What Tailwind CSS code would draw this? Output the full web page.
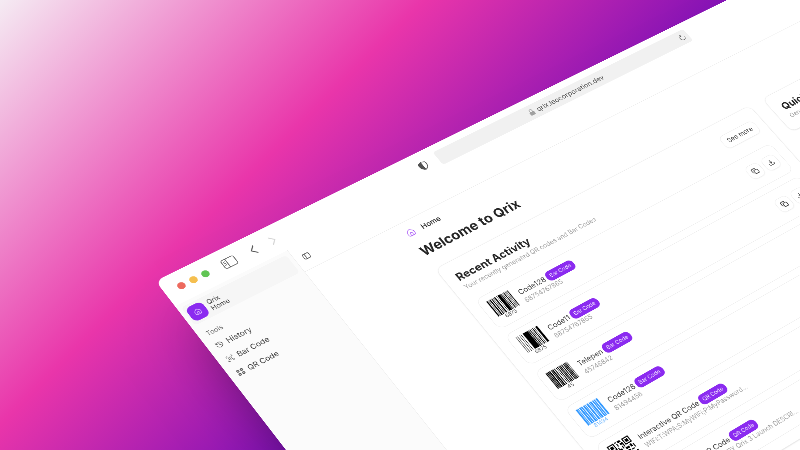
<!DOCTYPE html>
<html lang="en">
<head>
<meta charset="utf-8">
<meta name="viewport" content="width=device-width, initial-scale=1">
<title>Qrix</title>
<script src="https://cdn.jsdelivr.net/npm/@tailwindcss/browser@4"></script>
</head>
<body class="relative h-screen overflow-hidden bg-[linear-gradient(135deg,#f5ebf3_0%,#e935aa_34%,#8512b6_58%,#5c0ab4_66%,#3b0a80_80%)] font-['Inter','Liberation_Sans',sans-serif] text-neutral-700">

<!-- Shared symbols -->
<svg class="hidden" aria-hidden="true">
  <symbol id="house" viewBox="0 0 24 24" fill="none" stroke="currentColor" stroke-width="1.6" stroke-linecap="round" stroke-linejoin="round"><path d="M9 21v-6a3 3 0 0 1 6 0v6"/><path d="M3 11a4 4 0 0 1 1.500-3l5-4.200a4 4 0 0 1 5 0l5 4.200A4 4 0 0 1 21 11v6a4 4 0 0 1-4 4H7a4 4 0 0 1-4-4z"/></symbol>
  <symbol id="panel" viewBox="0 0 24 24" fill="none" stroke="currentColor" stroke-width="2" stroke-linecap="round" stroke-linejoin="round"><rect x="2" y="3" width="20" height="18" rx="4"/><path d="M9 3v18"/></symbol>
  <symbol id="copy" viewBox="0 0 24 24" fill="none" stroke="currentColor" stroke-width="2.4" stroke-linecap="round" stroke-linejoin="round"><rect x="8" y="8" width="14" height="14" rx="3"/><path d="M4 16a2 2 0 0 1-2-2V5a3 3 0 0 1 3-3h9a2 2 0 0 1 2 2"/></symbol>
  <symbol id="download" viewBox="0 0 24 24" fill="none" stroke="currentColor" stroke-width="2.4" stroke-linecap="round" stroke-linejoin="round"><path d="M12 15V3M8 11l4 4 4-4M21 15v2a4 4 0 0 1-4 4H7a4 4 0 0 1-4-4v-2"/></symbol>
  <symbol id="code-a" viewBox="-4 -3 64 62" fill="currentColor"><path d="M0 0h3v44H0zM5 0h1v44H5zM8 0h3v44H8zM13 0h2v44h-2zM17 0h1v44h-1zM20 0h3v44h-3zM26 0h1v44h-1zM29 0h7v44h-7zM37 0h2v44h-2zM41 0h1v44h-1zM44 0h2v44h-2zM48 0h1v44h-1zM51 0h1v44h-1zM54 0h2v44h-2z"/><text x="28" y="55" text-anchor="middle" font-size="12" opacity=".7">6875</text></symbol>
  <symbol id="code-b" viewBox="-4 -3 64 62" fill="currentColor"><path d="M0 0h1v44H0zM4 0h1v44H4zM9 0h1v44H9zM13 0h1v44h-1zM18 0h13v44H18zM32 0h2v44h-2zM36 0h2v44h-2zM40 0h1v44h-1zM43 0h2v44h-2zM47 0h1v44h-1zM51 0h5v44h-5z"/><text x="28" y="55" text-anchor="middle" font-size="12" opacity=".7">6875</text></symbol>
  <symbol id="code-c" viewBox="-4 -3 64 62" fill="currentColor"><path d="M0 0h2v44H0zM3 0h2v44H3zM6 0h2v44H6zM9 0h3v44H9zM14 0h2v44h-2zM17 0h3v44h-3zM22 0h2v44h-2zM27 0h1v44h-1zM30 0h2v44h-2zM34 0h2v44h-2zM37 0h2v44h-2zM41 0h2v44h-2zM45 0h2v44h-2zM48 0h2v44h-2zM51 0h2v44h-2zM55 0h1v44h-1z"/><text x="28" y="55" text-anchor="middle" font-size="12" opacity=".7">45</text></symbol>
  <symbol id="code-d" viewBox="-4 -3 64 62" fill="currentColor"><path d="M0 0h4v44H0zM5 0h2v44H5zM9 0h4v44H9zM14 0h3v44h-3zM19 0h4v44h-4zM24 0h2v44h-2zM28 0h4v44h-4zM34 0h2v44h-2zM37 0h4v44h-4zM43 0h3v44h-3zM47 0h3v44h-3zM52 0h4v44h-4z"/><text x="28" y="55" text-anchor="middle" font-size="12" opacity=".7">81494</text></symbol>
  <symbol id="code-q" viewBox="-2 -2 27 27" fill="currentColor"><path fill-rule="evenodd" d="M0 0h7v7H0zM1 1v5h5V1zM16 0h7v7h-7zM17 1v5h5V1zM0 16h7v7H0zM1 17v5h5v-5z"/><path d="M2 2h3v3H2zM18 2h3v3h-3zM2 18h3v3H2zM8 0h2v1H8zM11 0h3v2h-3zM9 2h1v3H9zM12 3h3v2h-3zM8 6h1v2h2v2H8zM12 6h1v3h-1zM14 5h1v3h-1zM0 8h2v2H0zM3 9h3v1H3zM5 11h4v2H5zM0 11h3v1H0zM1 13h2v2H1zM4 14h3v1H4zM10 11h3v3h-3zM14 9h4v2h-4zM19 8h2v3h-2zM22 9h1v4h-1zM15 12h2v3h-2zM18 13h3v1h-3zM8 15h2v2H8zM12 15h2v3h-2zM9 18h2v2H9zM8 21h4v2H8zM13 20h3v1h-3zM15 16h3v3h-3zM19 16h4v1h-4zM20 18h2v3h-2zM14 22h4v1h-4zM18 20h1v2h-1zM22 22h1v1h-1z"/></symbol>
</svg>

<!-- Browser window, laid flat and tilted in perspective -->
<div class="absolute left-0 top-0 w-[1950px] origin-top-left overflow-hidden rounded-2xl bg-white shadow-[0_120px_120px_-20px_rgb(0_0_0/0.5)] [transform:matrix3d(0.4651,-0.1944,0,0.0000959,0.2771,0.3541,0,-0.00006105,0,0,1,0,155.5,281,0,1)]">
  <header class="grid h-[68px] grid-cols-[1fr_664px_1fr] items-center gap-6 px-7 text-neutral-600">
    <div class="flex items-center">
      <div class="flex gap-[11px]"><span class="size-4 rounded-full bg-[#ed6a5e]"></span><span class="size-4 rounded-full bg-[#f5bf4f]"></span><span class="size-4 rounded-full bg-[#61c554]"></span></div>
      <button aria-label="Show sidebar" class="ml-7"><svg class="h-7 w-9" viewBox="0 0 36 28" fill="none" stroke="currentColor" stroke-width="1.6"><rect x="4" y="4" width="28" height="21" rx="4"/><path d="M14 4v21M7 9h4M7 13h4M7 17h4"/></svg></button>
      <button aria-label="Back" class="ml-6"><svg class="size-7" viewBox="0 0 28 28" fill="none" stroke="currentColor" stroke-width="2.2" stroke-linecap="round"><path d="M18 5 9 14l9 9"/></svg></button>
      <button aria-label="Forward" class="ml-4 text-neutral-300"><svg class="size-7" viewBox="0 0 28 28" fill="none" stroke="currentColor" stroke-width="2.2" stroke-linecap="round"><path d="m10 5 9 9-9 9"/></svg></button>
      <button aria-label="Privacy report" class="ml-auto"><svg class="size-6" viewBox="0 0 24 24"><path d="M12 2c3 1 5 2 8 3 2 8 0 14-8 17C4 19 2 13 4 5c3-1 5-2 8-3z" fill="none" stroke="currentColor" stroke-width="1.600"/><path d="M12 2v20C4 19 2 13 4 5c3-1 5-2 8-3z" fill="currentColor"/></svg></button>
    </div>
    <div class="flex h-9 items-center rounded-md bg-[#f1f1f1] px-2">
      <div class="flex flex-1 items-center justify-center gap-2 pl-4"><svg class="h-4 w-3 text-neutral-400" viewBox="0 0 12 16" aria-hidden="true"><rect y="7" width="12" height="9" rx="2" fill="currentColor"/><path d="M3 7V4a3 3 0 0 1 6 0v3" fill="none" stroke="currentColor" stroke-width="1.5"/></svg><span>qrix.leocorporation.dev</span></div>
      <button aria-label="Reload"><svg class="size-4" viewBox="0 0 24 24" fill="none" stroke="currentColor" stroke-width="2" stroke-linecap="round"><path d="M12 4a9 9 0 1 0 9 9M12 4l-3-3M12 4 9 8"/></svg></button>
    </div>
    <div></div>
  </header>

  <div class="flex min-h-[1100px]">
    <aside class="w-64 shrink-0 border-r border-[#ececec] bg-[#fbfbfb] p-2">
      <a href="#" class="flex h-12 items-center gap-2 rounded-lg bg-[#f6f6f6] py-2 pl-1 pr-2 text-sm leading-4">
        <span class="flex size-9 items-center justify-center rounded-xl bg-[#8b2bf0] text-purple-200"><svg class="size-4"><use href="#house"/></svg></span>
        <span class="flex flex-col"><span>Qrix</span><span>Home</span></span>
      </a>
      <nav class="pt-3" aria-label="Tools">
        <h2 class="flex h-8 items-center px-2 text-sm text-neutral-500">Tools</h2>
        <ul class="flex flex-col gap-1 text-base">
          <li><a href="#" class="flex h-8 items-center gap-2 px-2"><svg class="size-4" viewBox="0 0 24 24" fill="none" stroke="currentColor" stroke-width="1.6" stroke-linecap="round" stroke-linejoin="round"><path d="M3 12a9 9 0 1 0 9-9 9.750 9.750 0 0 0-6.740 2.740L3 8"/><path d="M3 3v5h5M12 7v5l4 2"/></svg>History</a></li>
          <li><a href="#" class="flex h-8 items-center gap-2 px-2"><svg class="size-4" viewBox="0 0 24 24" fill="none" stroke="currentColor" stroke-width="1.6" stroke-linecap="round" stroke-linejoin="round"><path d="M3 7V5a2 2 0 0 1 2-2h2M17 3h2a2 2 0 0 1 2 2v2M21 17v2a2 2 0 0 1-2 2h-2M7 21H5a2 2 0 0 1-2-2v-2M8 7v10M12 7v10M17 7v10"/></svg>Bar Code</a></li>
          <li><a href="#" class="flex h-8 items-center gap-2 px-2"><svg class="size-4" viewBox="0 0 24 24" fill="currentColor" fill-opacity=".3" stroke="currentColor" stroke-width="2" stroke-linecap="round" stroke-linejoin="round"><rect x="3" y="3" width="6" height="6" rx="1"/><rect x="15" y="3" width="6" height="6" rx="1"/><rect x="3" y="15" width="6" height="6" rx="1"/><rect x="15" y="15" width="6" height="6" rx="1"/></svg>QR Code</a></li>
        </ul>
      </nav>
    </aside>

    <div class="min-w-0 flex-1">
      <div class="flex h-[60px] items-center border-b border-[#ececec] px-4"><button aria-label="Toggle sidebar"><svg class="size-4"><use href="#panel"/></svg></button></div>
      <main class="mx-auto max-w-7xl px-4 pt-4">
        <div class="flex items-center gap-4 font-medium text-neutral-800"><svg class="size-5 text-[#a855f7]"><use href="#house"/></svg><span>Home</span></div>
        <h1 class="mt-5 text-3xl font-bold text-neutral-800">Welcome to Qrix</h1>

        <div class="mt-7 grid grid-cols-[824px_1fr] items-start gap-9">
          <section class="flex flex-col gap-6 rounded-2xl border border-[#ececec] p-6 shadow-sm">
            <div class="flex items-center justify-between">
              <div><h2 class="text-2xl font-bold text-neutral-800">Recent Activity</h2><p class="text-sm text-neutral-400">Your recently generated QR codes and Bar Codes</p></div>
              <button class="-mr-1 h-9 rounded-xl border border-[#ececec] px-3 text-[15px] shadow-xs">See more</button>
            </div>
            <ul class="flex flex-col gap-4" id="activity"></ul>
          </section>
          <section class="rounded-2xl border border-[#ececec] p-6 shadow-sm">
            <h2 class="text-2xl font-bold text-neutral-800">Quick Actions</h2>
            <p class="text-sm text-neutral-400">Generate codes in one click</p>
          </section>
        </div>
      </main>
    </div>
  </div>
</div>

<template id="row">
  <li class="flex items-center gap-3 rounded-2xl border border-[#ececec] p-3">
    <svg class="size-[60px] -my-0.5"><use/></svg>
    <div class="flex-1">
      <div class="flex items-center gap-1"><h3 class="text-base"></h3><span class="rounded-[10px] bg-[#8b2bf0] px-2 py-1 text-xs text-purple-100"></span></div>
      <p class="text-sm text-neutral-400"></p>
    </div>
    <div class="flex gap-2">
      <button aria-label="Copy" class="flex size-9 items-center justify-center rounded-xl border border-[#ececec] shadow-xs"><svg class="size-4"><use href="#copy"/></svg></button>
      <button aria-label="Download" class="flex size-9 items-center justify-center rounded-xl border border-[#ececec] shadow-xs"><svg class="size-4"><use href="#download"/></svg></button>
    </div>
  </li>
</template>
<script>
const items = [
  ['Code128', 'Bar Code', '68754767865', '#code-a', 'text-black'],
  ['Code11', 'Bar Code', '68754767865', '#code-b', 'text-black'],
  ['Telepen', 'Bar Code', '45746842', '#code-c', 'text-black'],
  ['Code128', 'Bar Code', '81494456', '#code-d', 'text-[#3399ff]'],
  ['Interactive QR Code', 'QR Code', 'WIFI:T:WPA;S:MyWiFi;P:MyPassword...', '#code-q', 'text-black'],
  ['Interactive QR Code', 'QR Code', 'T: VEVENT SUMMARY Qrix 3 Launch DESCRI...', '#code-q', 'text-black']
];
const template = document.getElementById('row');
for (const [name, kind, value, code, color] of items) {
  const row = template.content.cloneNode(true);
  row.querySelector('svg').classList.add(color);
  row.querySelector('use').setAttribute('href', code);
  row.querySelector('h3').textContent = name;
  row.querySelector('span').textContent = kind;
  row.querySelector('p').textContent = value;
  document.getElementById('activity').append(row);
}
</script>
</body>
</html>
